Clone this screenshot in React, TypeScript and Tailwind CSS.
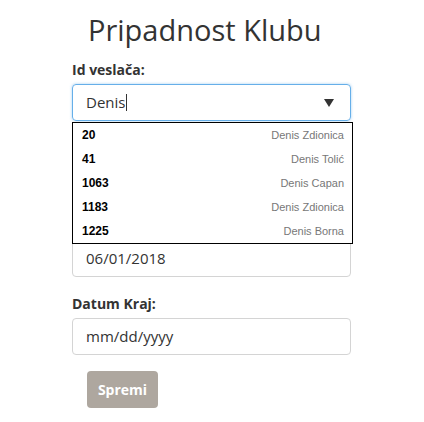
import React from "react";

const options = [
  { id: "20", name: "Denis Zdionica" },
  { id: "41", name: "Denis Tolić" },
  { id: "1063", name: "Denis Capan" },
  { id: "1183", name: "Denis Zdionica" },
  { id: "1225", name: "Denis Borna" },
];

function Field({ label, value, placeholder }: { label: string; value?: string; placeholder?: string }) {
  return (
    <div className="mb-4">
      <label className="block text-[14px] font-bold leading-[21px] text-[#333] mb-1">{label}</label>
      <div className="h-[37px] flex items-center px-[13px] border border-[#d4d4d4] rounded-[4px] text-[15px] text-[#333]">
        {value ?? placeholder}
      </div>
    </div>
  );
}

export default function App() {
  return (
    <div className="w-[424px] h-[422px] bg-white overflow-hidden" style={{ fontFamily: '"Open Sans", sans-serif' }}>
      <div className="ml-[72px] w-[279px] pt-[10px]">
        {/* Title */}
        <h1 className="pl-[16px] text-[29px] leading-[40px] text-[#333] mb-[9px]">Pripadnost Klubu</h1>

        {/* Id veslača with open autocomplete */}
        <div className="relative mb-4">
          <label className="block text-[14px] font-bold leading-[21px] text-[#333] mb-1">Id veslača:</label>
          <div className="h-[37px] flex items-center px-[13px] border border-[#66afe9] rounded-[4px] shadow-[0_0_3px_rgba(102,175,233,0.6)] text-[15px] text-[#333]">
            <span>Denis</span>
            <span className="w-px h-[17px] bg-[#333] ml-[1px]" />
            <svg className="ml-auto mr-[3px]" width="10" height="8" viewBox="0 0 10 8">
              <polygon points="0,0 10,0 5,8" fill="#333" />
            </svg>
          </div>
          <div className="absolute left-0 top-[63px] w-[281px] z-10 bg-white border border-black" style={{ fontFamily: '"Liberation Sans", Arial, sans-serif' }}>
            {options.map((o) => (
              <div key={o.id + o.name} className="h-[24px] flex items-center pl-[9px] pr-[8px]">
                <span className="text-[12px] font-bold text-black">{o.id}</span>
                <span className="ml-auto text-[11px] text-[#777]">{o.name}</span>
              </div>
            ))}
          </div>
        </div>

        <Field label="Id kluba:" value="" />
        <Field label="Datum Početak:" value="06/01/2018" />
        <Field label="Datum Kraj:" placeholder="mm/dd/yyyy" />

        <button className="ml-[15px] h-[37px] w-[71px] rounded-[4px] bg-[#aea79f] text-white text-[14px] font-bold">
          Spremi
        </button>
      </div>
    </div>
  );
}
